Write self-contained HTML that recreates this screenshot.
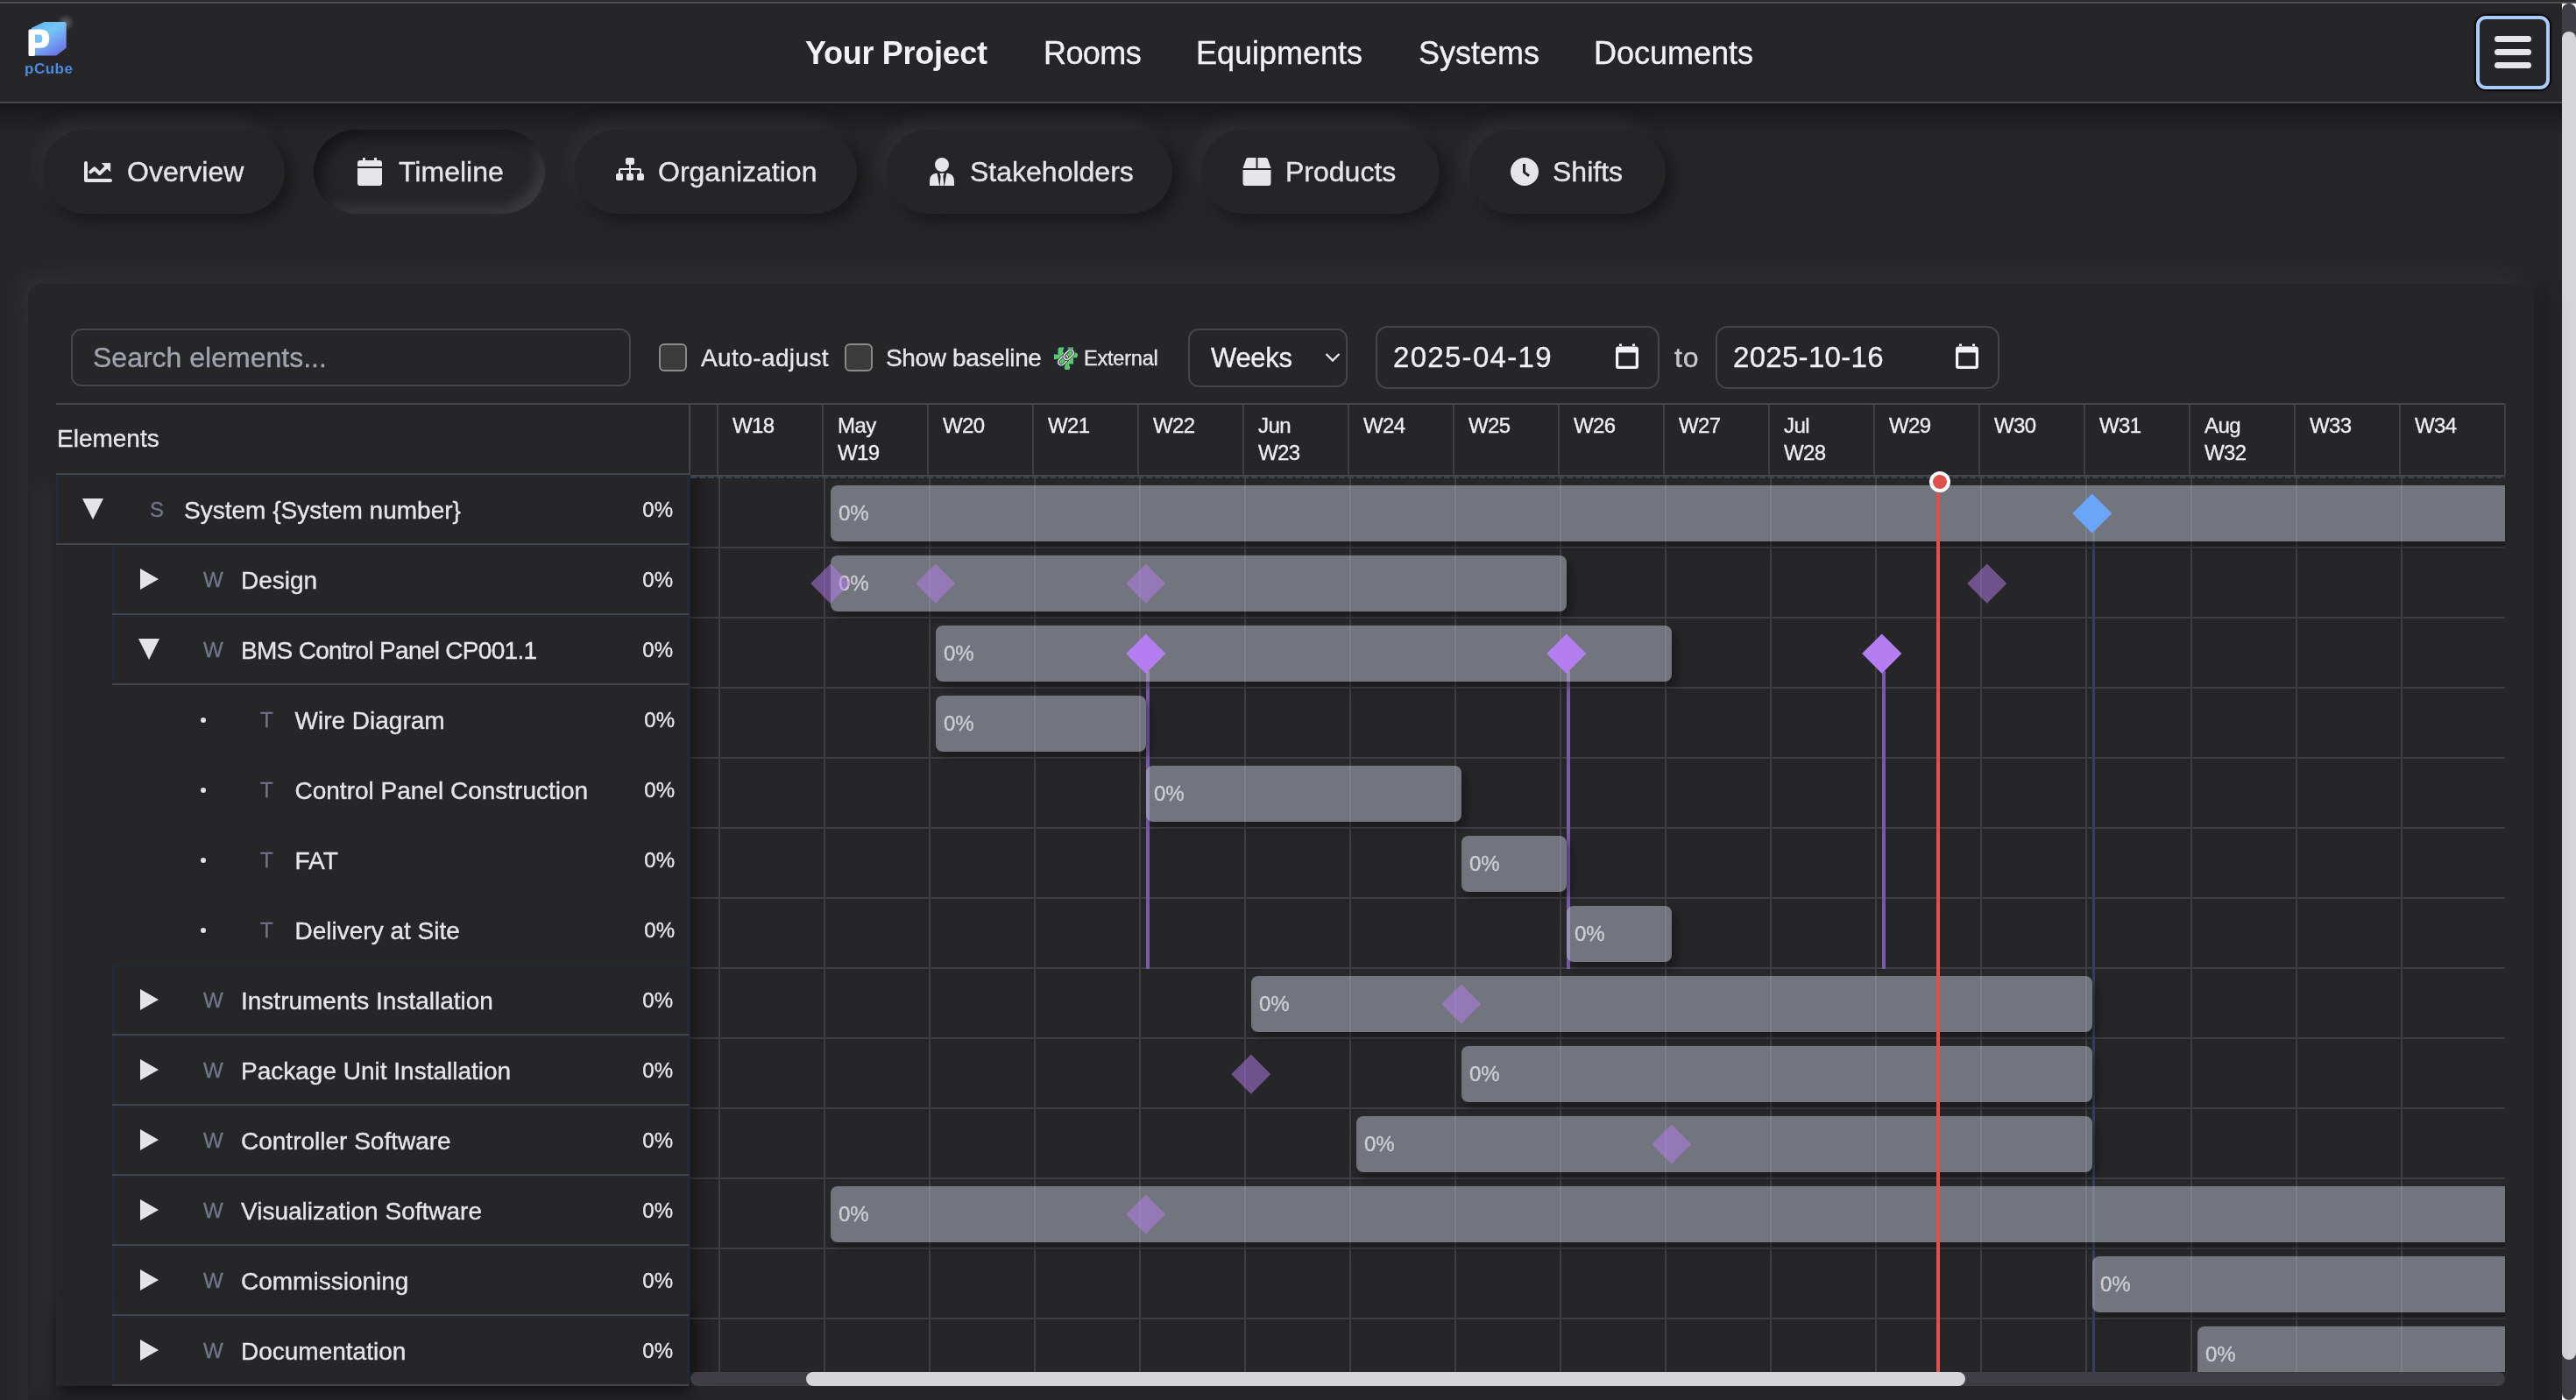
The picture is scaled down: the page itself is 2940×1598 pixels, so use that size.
<!DOCTYPE html>
<html><head><meta charset="utf-8">
<style>
*{box-sizing:border-box;margin:0;padding:0}
html,body{width:2940px;height:1598px;overflow:hidden;background:#262628;font-family:"Liberation Sans",sans-serif;color:#e6e6ea}
#wrap{-webkit-text-stroke:0.35px currentColor}
.a{position:absolute}
#topline0{left:0;top:0;width:2940px;height:2px;background:#2b2b2d}
#topline{left:0;top:2px;width:2940px;height:2px;background:#505052}
#nav{left:0;top:4px;width:2924px;height:112px;background:#262629}
#navb{left:0;top:116px;width:2924px;height:2px;background:#47474d}
#navsh{left:0;top:118px;width:2924px;height:34px;background:linear-gradient(#18181a,rgba(24,24,26,0.6) 40%,rgba(38,38,40,0))}
.nl{top:39px;font-size:36px;line-height:44px;color:#f2f2f4;white-space:nowrap}
#logo{left:25px;top:22px;width:64px;height:70px}
#ham{left:2826px;top:18px;width:84px;height:84px;border-radius:11px;background:#262629;border:4px solid #a8cbf7;box-shadow:0 0 0 1.5px #000,0 0 3px 1px #000}
#ham i{position:absolute;left:17px;width:42px;height:7px;border-radius:4px;background:#e6e6ea}
#vsb{left:2924px;top:4px;width:16px;height:1594px;background:#fff}
#vsbt{left:0;top:0;width:16px;height:1594px;background:#3f3e44;border-radius:8px}
#vsbth{left:0;top:32px;width:16px;height:1516px;background:#d5d4d9;border-radius:8px}

.tab{top:148px;height:96px;border-radius:48px;background:#252527;box-shadow:8px 8px 16px #19191b,-8px -8px 16px #2f2f32;font-size:32px;line-height:96px;white-space:nowrap;color:#e6e6ea}
.tab.on{box-shadow:inset 8px 8px 14px #161618,inset -8px -8px 14px #3c3c3f}
.tab svg{position:absolute;fill:#e6e6ea}
.tab span{position:absolute;top:0}

#card{left:32px;top:324px;width:2860px;height:1400px;border-radius:16px;background:#262628;box-shadow:-10px -10px 22px #303033,10px 10px 24px #1c1c1e}
.inp{border:2px solid #45454b;border-radius:12px}
.cb{width:32px;height:32px;border:2px solid #8a8a8a;background:#3b3b3b;border-radius:6px}
.lbl{font-size:28px;line-height:32px;white-space:nowrap;color:#e6e6ea}
.hl{top:470px;font-size:24px;line-height:31px;white-space:nowrap;color:#ececf0;letter-spacing:-0.6px}
.bar{height:64px;border-radius:8px;background:rgba(178,182,196,0.55);box-shadow:5px 6px 10px rgba(0,0,0,0.32),-5px -5px 10px rgba(255,255,255,0.022)}
.bar span{position:absolute;left:9px;top:17.5px;font-size:24px;line-height:28px;color:#cdcdd2}
.dm{width:31.5px;height:31.5px;transform:rotate(45deg)}
.dm.se{background:rgba(181,126,240,0.5)}
.dm.pu{background:#b57ef0}
.dm.bl{background:#6aa5f8}
.ty{font-size:24px;line-height:28px;color:#6e7688}
.nm{font-size:28px;line-height:32px;white-space:nowrap;color:#e6e6ea}
.pc{width:100px;text-align:right;font-size:24px;line-height:28px;color:#e6e6ea}
</style></head><body>
<div id="wrap" style="position:absolute;left:0;top:0;width:2940px;height:1598px;overflow:hidden;will-change:transform">
<div class="a" id="topline0"></div>
<div class="a" id="topline"></div>
<div class="a" id="nav"></div>
<div class="a" id="navb"></div>
<div class="a" id="navsh"></div>
<!-- logo -->
<svg class="a" id="logo" viewBox="0 0 64 70" style="overflow:visible">
 <defs><linearGradient id="lg" x1="0.2" y1="0" x2="0.85" y2="1"><stop offset="0" stop-color="#5fb6f2"/><stop offset="0.35" stop-color="#76c6f8"/><stop offset="1" stop-color="#6b6ce6"/></linearGradient>
 <radialGradient id="gl" cx="0.5" cy="0.5" r="0.5"><stop offset="0" stop-color="#fff" stop-opacity="0.5"/><stop offset="1" stop-color="#fff" stop-opacity="0"/></radialGradient></defs>
 <circle cx="50" cy="4" r="10" fill="url(#gl)" opacity="0.55"/>
 <path d="M10.7 10 L25.6 3 H47.4 Q50.7 3 50.7 6.3 V32.8 L39 41.6 H15 Z" fill="url(#lg)"/>
 <path d="M7.5 13 Q7.5 11.4 9 11.4 H21 Q31.2 11.4 31.2 22.1 Q31.2 32.8 21 32.8 H15 V40.5 Q15 42 13.5 42 H9 Q7.5 42 7.5 40.5 Z M15 17.5 V26.7 H20.5 Q23.3 26.7 23.3 22.1 Q23.3 17.5 20.5 17.5 Z" fill="#fff" fill-rule="evenodd"/>
 <text x="3" y="62" font-family="Liberation Sans" font-weight="bold" font-size="17" letter-spacing="0.5" fill="#4a8ae0" style="-webkit-text-stroke:0">pCube</text>
</svg>
<div class="a nl" style="left:919px;font-weight:bold;letter-spacing:-0.3px;-webkit-text-stroke:0">Your Project</div>
<div class="a nl" style="left:1191px;letter-spacing:-0.6px">Rooms</div>
<div class="a nl" style="left:1365px">Equipments</div>
<div class="a nl" style="left:1619px">Systems</div>
<div class="a nl" style="left:1819px">Documents</div>
<div class="a" id="ham"><i style="top:19px"></i><i style="top:34px"></i><i style="top:49px"></i></div>
<div class="a" id="vsb"><div class="a" id="vsbt"></div><div class="a" id="vsbth"></div></div>

<!-- tabs -->
<div class="a tab" style="left:49px;width:276px">
 <svg style="left:47px;top:36px" width="32" height="24" viewBox="0 0 32 24"><path d="M2 2V22H30" fill="none" stroke="#e6e6ea" stroke-width="4" stroke-linecap="round" stroke-linejoin="round"/><path d="M7.3 12.3L11.9 8.4L17.7 14.1L24.5 7.5" fill="none" stroke="#e6e6ea" stroke-width="4" stroke-linecap="round" stroke-linejoin="round"/><path d="M20.6 2.4H29.7V11.6Z" stroke="#e6e6ea" stroke-width="1" stroke-linejoin="round"/></svg>
 <span style="left:96px">Overview</span></div>
<div class="a tab on" style="left:358px;width:264px">
 <svg style="left:50px;top:32px" width="28" height="32" viewBox="0 0 28 32"><path d="M6 0h3v4H6z M19 0h3v4h-3z"/><path d="M3 3h22a3 3 0 0 1 3 3v4H0V6a3 3 0 0 1 3-3z M0 12h28v17a3 3 0 0 1-3 3H3a3 3 0 0 1-3-3z"/></svg>
 <span style="left:97px">Timeline</span></div>
<div class="a tab" style="left:656px;width:322px">
 <svg style="left:47px;top:32px" width="32" height="28" viewBox="0 0 32 28"><rect x="11" y="0" width="10" height="8" rx="2"/><rect x="0" y="18" width="8" height="8" rx="2"/><rect x="12" y="18" width="8" height="8" rx="2"/><rect x="24" y="18" width="8" height="8" rx="2"/><path d="M15 8h2v4h10a2 2 0 0 1 2 2v4h-2v-4H17v4h-2v-4H5v4H3v-4a2 2 0 0 1 2-2h10z"/></svg>
 <span style="left:95px">Organization</span></div>
<div class="a tab" style="left:1012px;width:326px">
 <svg style="left:48px;top:32px" width="30" height="32" viewBox="0 0 30 32"><circle cx="15" cy="8" r="8"/><path d="M9.6 17.8 L12.2 32 H1 V27 Q1 18.6 8.2 17.8 Z M20.4 17.8 L17.8 32 H29 V27 Q29 18.6 21.8 17.8 Z M12.3 17.8 H17.7 L16.4 21 L17.4 32 H12.6 L13.6 21 Z"/></svg>
 <span style="left:95px">Stakeholders</span></div>
<div class="a tab" style="left:1371px;width:272px">
 <svg style="left:47px;top:32px" width="33" height="32" viewBox="0 0 33 32"><path d="M6 0h9.5v12H0.5L4 2A3 3 0 0 1 6 0z M17.5 0H27a3 3 0 0 1 2 2l3.5 10H17.5z M0.5 14h32v15a3 3 0 0 1-3 3h-26a3 3 0 0 1-3-3z"/></svg>
 <span style="left:96px">Products</span></div>
<div class="a tab" style="left:1677px;width:224px">
 <svg style="left:47px;top:32px" width="32" height="32" viewBox="0 0 32 32"><path d="M16 0a16 16 0 1 1 0 32a16 16 0 1 1 0-32z M14 7v9.5a1.5 1.5 0 0 0 0.7 1.3l5.5 4.2l1.8-2.4l-4.9-3.6V7z" fill-rule="evenodd"/></svg>
 <span style="left:95px">Shifts</span></div>

<!-- card -->
<div class="a" id="card"></div>
<div class="a inp" style="left:81px;top:375px;width:639px;height:66px"></div>
<div class="a" style="left:106px;top:388px;font-size:32px;line-height:40px;color:#9ea3ad;white-space:nowrap">Search elements...</div>
<div class="a cb" style="left:752px;top:392px"></div>
<div class="a lbl" style="left:800px;top:392.5px;letter-spacing:0.4px">Auto-adjust</div>
<div class="a cb" style="left:964px;top:392px"></div>
<div class="a lbl" style="left:1011px;top:392.5px;letter-spacing:-0.35px">Show baseline</div>
<svg class="a" style="left:1203px;top:394px" width="27" height="28" viewBox="0 0 27 28">
 <rect x="1" y="1.5" width="24.5" height="25" rx="5" fill="#1e2839"/>
 <path d="M6 2.5h5.5l-0.8 2.5a3.3 3.3 0 1 0 5.6 0l-0.8-2.5H22v6.5l2-0.5a3 3 0 1 1 0 6l-2-0.5V21.5h-5l0.8 2.5a3.2 3.2 0 1 1-5.6 0l0.8-2.5H4.5V15.5l-2.5 0.6a3 3 0 1 1 0-5.7l2.5 0.6V4z" fill="#5cc96a"/>
 <g fill="none" transform="rotate(-45 13.5 14)"><rect x="2.5" y="10.5" width="13" height="7" rx="3.5" stroke="#3a3a3a" stroke-width="3"/><rect x="2.5" y="10.5" width="13" height="7" rx="3.5" stroke="#d9dde6" stroke-width="1.6"/><rect x="11.5" y="10.5" width="13" height="7" rx="3.5" stroke="#3a3a3a" stroke-width="3"/><rect x="11.5" y="10.5" width="13" height="7" rx="3.5" stroke="#d9dde6" stroke-width="1.6"/></g>
</svg>
<div class="a" style="left:1237px;top:394.5px;font-size:23.5px;line-height:28px;white-space:nowrap;letter-spacing:-0.2px">External</div>
<div class="a inp" style="left:1355.5px;top:375px;width:182px;height:67px"></div>
<div class="a" style="left:1382px;top:389px;font-size:31px;line-height:40px;white-space:nowrap;color:#f0f0f2;letter-spacing:-0.3px">Weeks</div>
<svg class="a" style="left:1512px;top:402px" width="18" height="12" viewBox="0 0 18 12"><path d="M1.5 2 L9 9.5 L16.5 2" fill="none" stroke="#e6e6ea" stroke-width="2.4"/></svg>
<div class="a inp" style="left:1570px;top:372px;width:324px;height:72px;border-radius:14px"></div>
<div class="a" style="left:1590px;top:388px;font-size:33px;line-height:40px;white-space:nowrap;color:#f0f0f2;letter-spacing:1.3px">2025-04-19</div>
<svg class="a" style="left:1844px;top:392px" width="26" height="29" viewBox="0 0 26 29"><path d="M4 0.5h3v3.5H4z M19 0.5h3v3.5h-3z M3 3.5h20a3 3 0 0 1 3 3v19.5a3 3 0 0 1-3 3H3a3 3 0 0 1-3-3V6.5a3 3 0 0 1 3-3z M3.2 10.4v15.4h19.5V10.4z" fill="#f4f4f6" fill-rule="evenodd"/></svg>
<div class="a" style="left:1911px;top:388px;font-size:32px;line-height:40px;color:#c8c8cc;letter-spacing:0.8px">to</div>
<div class="a inp" style="left:1958px;top:372px;width:324px;height:72px;border-radius:14px"></div>
<div class="a" style="left:1978px;top:388px;font-size:33px;line-height:40px;white-space:nowrap;color:#f0f0f2;letter-spacing:0.3px">2025-10-16</div>
<svg class="a" style="left:2232px;top:392px" width="26" height="29" viewBox="0 0 26 29"><path d="M4 0.5h3v3.5H4z M19 0.5h3v3.5h-3z M3 3.5h20a3 3 0 0 1 3 3v19.5a3 3 0 0 1-3 3H3a3 3 0 0 1-3-3V6.5a3 3 0 0 1 3-3z M3.2 10.4v15.4h19.5V10.4z" fill="#f4f4f6" fill-rule="evenodd"/></svg>

<!-- GANTT -->
<div class="a" style="left:64px;top:460px;width:2795px;height:1122px;background:#262628"></div>
<div class="a" style="left:60px;top:560px;width:4px;height:1022px;box-shadow:-12px 0 20px 8px rgba(255,255,255,0.03)"></div>
<div class="a" style="left:64px;top:1482px;width:723px;height:100px;box-shadow:2px 12px 16px -2px #161618"></div>
<div class="a" style="left:64px;top:460px;width:2795px;height:2px;background:#45454b"></div>
<div class="a" style="left:65px;top:485px;font-size:28px;line-height:32px;white-space:nowrap">Elements</div>
<div class="a" style="left:64px;top:540px;width:724px;height:2px;background:#45454b"></div>
<div class="a" style="left:786px;top:462px;width:2px;height:80px;background:#45454b"></div>
<div class="a" style="left:818px;top:462px;width:2px;height:80px;background:#3f3f45"></div>
<div class="a" style="left:938px;top:462px;width:2px;height:80px;background:#3f3f45"></div>
<div class="a" style="left:1058px;top:462px;width:2px;height:80px;background:#3f3f45"></div>
<div class="a" style="left:1178px;top:462px;width:2px;height:80px;background:#3f3f45"></div>
<div class="a" style="left:1298px;top:462px;width:2px;height:80px;background:#3f3f45"></div>
<div class="a" style="left:1418px;top:462px;width:2px;height:80px;background:#3f3f45"></div>
<div class="a" style="left:1538px;top:462px;width:2px;height:80px;background:#3f3f45"></div>
<div class="a" style="left:1658px;top:462px;width:2px;height:80px;background:#3f3f45"></div>
<div class="a" style="left:1778px;top:462px;width:2px;height:80px;background:#3f3f45"></div>
<div class="a" style="left:1898px;top:462px;width:2px;height:80px;background:#3f3f45"></div>
<div class="a" style="left:2018px;top:462px;width:2px;height:80px;background:#3f3f45"></div>
<div class="a" style="left:2138px;top:462px;width:2px;height:80px;background:#3f3f45"></div>
<div class="a" style="left:2258px;top:462px;width:2px;height:80px;background:#3f3f45"></div>
<div class="a" style="left:2378px;top:462px;width:2px;height:80px;background:#3f3f45"></div>
<div class="a" style="left:2498px;top:462px;width:2px;height:80px;background:#3f3f45"></div>
<div class="a" style="left:2618px;top:462px;width:2px;height:80px;background:#3f3f45"></div>
<div class="a" style="left:2738px;top:462px;width:2px;height:80px;background:#3f3f45"></div>
<div class="a" style="left:2858px;top:462px;width:2px;height:80px;background:#3f3f45"></div>
<div class="a hl" style="left:836px">W18</div>
<div class="a hl" style="left:956px">May<br>W19</div>
<div class="a hl" style="left:1076px">W20</div>
<div class="a hl" style="left:1196px">W21</div>
<div class="a hl" style="left:1316px">W22</div>
<div class="a hl" style="left:1436px">Jun<br>W23</div>
<div class="a hl" style="left:1556px">W24</div>
<div class="a hl" style="left:1676px">W25</div>
<div class="a hl" style="left:1796px">W26</div>
<div class="a hl" style="left:1916px">W27</div>
<div class="a hl" style="left:2036px">Jul<br>W28</div>
<div class="a hl" style="left:2156px">W29</div>
<div class="a hl" style="left:2276px">W30</div>
<div class="a hl" style="left:2396px">W31</div>
<div class="a hl" style="left:2516px">Aug<br>W32</div>
<div class="a hl" style="left:2636px">W33</div>
<div class="a hl" style="left:2756px">W34</div>
<div class="a" style="left:788px;top:542px;width:2071px;height:2px;background:#45454b"></div>
<div class="a" style="left:788px;top:544px;width:2071px;height:2px;background:repeating-linear-gradient(90deg,#3b424f 0 7px,transparent 7px 10px)"></div>
<div class="a" id="tl" style="left:788px;top:546px;width:2071px;height:1020px;overflow:hidden">
<div class="a" style="left:0;top:78px;width:2071px;height:2px;background:#3d3d43"></div>
<div class="a" style="left:0;top:158px;width:2071px;height:2px;background:#3d3d43"></div>
<div class="a" style="left:0;top:238px;width:2071px;height:2px;background:#3d3d43"></div>
<div class="a" style="left:0;top:318px;width:2071px;height:2px;background:#3d3d43"></div>
<div class="a" style="left:0;top:398px;width:2071px;height:2px;background:#3d3d43"></div>
<div class="a" style="left:0;top:478px;width:2071px;height:2px;background:#3d3d43"></div>
<div class="a" style="left:0;top:558px;width:2071px;height:2px;background:#3d3d43"></div>
<div class="a" style="left:0;top:638px;width:2071px;height:2px;background:#3d3d43"></div>
<div class="a" style="left:0;top:718px;width:2071px;height:2px;background:#3d3d43"></div>
<div class="a" style="left:0;top:798px;width:2071px;height:2px;background:#3d3d43"></div>
<div class="a" style="left:0;top:878px;width:2071px;height:2px;background:#3d3d43"></div>
<div class="a" style="left:0;top:958px;width:2071px;height:2px;background:#3d3d43"></div>
<div class="a" style="left:0;top:1038px;width:2071px;height:2px;background:#3d3d43"></div>
<div class="a" style="left:32px;top:0;width:2px;height:1020px;background:#3d3d43"></div>
<div class="a" style="left:152px;top:0;width:2px;height:1020px;background:#3d3d43"></div>
<div class="a" style="left:272px;top:0;width:2px;height:1020px;background:#3d3d43"></div>
<div class="a" style="left:392px;top:0;width:2px;height:1020px;background:#3d3d43"></div>
<div class="a" style="left:512px;top:0;width:2px;height:1020px;background:#3d3d43"></div>
<div class="a" style="left:632px;top:0;width:2px;height:1020px;background:#3d3d43"></div>
<div class="a" style="left:752px;top:0;width:2px;height:1020px;background:#3d3d43"></div>
<div class="a" style="left:872px;top:0;width:2px;height:1020px;background:#3d3d43"></div>
<div class="a" style="left:992px;top:0;width:2px;height:1020px;background:#3d3d43"></div>
<div class="a" style="left:1112px;top:0;width:2px;height:1020px;background:#3d3d43"></div>
<div class="a" style="left:1232px;top:0;width:2px;height:1020px;background:#3d3d43"></div>
<div class="a" style="left:1352px;top:0;width:2px;height:1020px;background:#3d3d43"></div>
<div class="a" style="left:1472px;top:0;width:2px;height:1020px;background:#3d3d43"></div>
<div class="a" style="left:1592px;top:0;width:2px;height:1020px;background:#3d3d43"></div>
<div class="a" style="left:1712px;top:0;width:2px;height:1020px;background:#3d3d43"></div>
<div class="a" style="left:1832px;top:0;width:2px;height:1020px;background:#3d3d43"></div>
<div class="a" style="left:1952px;top:0;width:2px;height:1020px;background:#3d3d43"></div>
<div class="a" style="left:2072px;top:0;width:2px;height:1020px;background:#3d3d43"></div>
<div class="a" style="left:1600px;top:60px;width:3px;height:1000px;background:#33415a"></div>
<div class="a" style="left:520px;top:220px;width:4px;height:340px;background:#785ba5"></div>
<div class="a" style="left:1000px;top:220px;width:4px;height:340px;background:#785ba5"></div>
<div class="a" style="left:1360px;top:220px;width:4px;height:340px;background:#785ba5"></div>
<div class="a bar" style="left:160px;top:8px;width:1923px"><span>0%</span></div>
<div class="a bar" style="left:160px;top:88px;width:840px"><span>0%</span></div>
<div class="a bar" style="left:280px;top:168px;width:840px"><span>0%</span></div>
<div class="a bar" style="left:280px;top:248px;width:240px"><span>0%</span></div>
<div class="a bar" style="left:520px;top:328px;width:360px"><span>0%</span></div>
<div class="a bar" style="left:880px;top:408px;width:120px"><span>0%</span></div>
<div class="a bar" style="left:1000px;top:488px;width:120px"><span>0%</span></div>
<div class="a bar" style="left:640px;top:568px;width:960px"><span>0%</span></div>
<div class="a bar" style="left:880px;top:648px;width:720px"><span>0%</span></div>
<div class="a bar" style="left:760px;top:728px;width:840px"><span>0%</span></div>
<div class="a bar" style="left:160px;top:808px;width:1923px"><span>0%</span></div>
<div class="a bar" style="left:1600px;top:888px;width:483px"><span>0%</span></div>
<div class="a bar" style="left:1720px;top:968px;width:363px"><span>0%</span></div>
<div class="a dm bl" style="left:1584.25px;top:23.75px"></div>
<div class="a dm se" style="left:144.25px;top:103.75px"></div>
<div class="a dm se" style="left:264.25px;top:103.75px"></div>
<div class="a dm se" style="left:504.25px;top:103.75px"></div>
<div class="a dm se" style="left:1464.25px;top:103.75px"></div>
<div class="a dm pu" style="left:504.25px;top:183.75px"></div>
<div class="a dm pu" style="left:984.25px;top:183.75px"></div>
<div class="a dm pu" style="left:1344.25px;top:183.75px"></div>
<div class="a dm se" style="left:864.25px;top:583.75px"></div>
<div class="a dm se" style="left:624.25px;top:663.75px"></div>
<div class="a dm se" style="left:1104.25px;top:743.75px"></div>
<div class="a dm se" style="left:504.25px;top:823.75px"></div>
<div class="a" style="left:1422px;top:4px;width:4px;height:1020px;background:#e0504a"></div>
<div class="a" style="left:0;top:0;width:34px;height:1020px;background:linear-gradient(90deg,rgba(0,0,0,0.3),rgba(0,0,0,0.08) 50%,rgba(0,0,0,0))"></div>
</div>
<div class="a" style="left:2202px;top:538px;width:24px;height:24px;border-radius:50%;background:#e0504a;border:4px solid #fff"></div>
<div class="a" style="left:788px;top:1566px;width:2071px;height:16px;border-radius:8px;background:#3f3e45"></div>
<div class="a" style="left:920px;top:1566px;width:1323px;height:16px;border-radius:8px;background:#d6d5da"></div>
<div class="a" style="left:784px;top:542px;width:2px;height:1040px;background:#1f2a3b"></div>
<div class="a" style="left:64px;top:542px;width:722px;height:1px;background:#1f2a3b"></div>
<div class="a" style="left:64px;top:542px;width:2px;height:78px;background:#1f2a3b"></div>
<div class="a" style="left:64px;top:620px;width:722px;height:2px;background:#45454b"></div>
<svg class="a" style="left:94px;top:569px" width="24" height="24" viewBox="0 0 24 24"><path d="M0 0H24L12 24Z" fill="#e4e4e8"/></svg>
<div class="a ty" style="left:171px;top:567.7px">S</div>
<div class="a nm" style="left:210px;top:567.3px">System {System number}</div>
<div class="a pc" style="left:668px;top:567.7px">0%</div>
<div class="a" style="left:128px;top:622px;width:658px;height:1px;background:#1f2a3b"></div>
<div class="a" style="left:128px;top:622px;width:2px;height:78px;background:#1f2a3b"></div>
<div class="a" style="left:128px;top:700px;width:658px;height:2px;background:#45454b"></div>
<svg class="a" style="left:159.5px;top:649px" width="21" height="24" viewBox="0 0 21 24"><path d="M0 0L21 12L0 24Z" fill="#e4e4e8"/></svg>
<div class="a ty" style="left:232px;top:647.7px">W</div>
<div class="a nm" style="left:275px;top:647.3px">Design</div>
<div class="a pc" style="left:668px;top:647.7px">0%</div>
<div class="a" style="left:128px;top:702px;width:658px;height:1px;background:#1f2a3b"></div>
<div class="a" style="left:128px;top:702px;width:2px;height:78px;background:#1f2a3b"></div>
<div class="a" style="left:128px;top:780px;width:658px;height:2px;background:#45454b"></div>
<svg class="a" style="left:158px;top:729px" width="24" height="24" viewBox="0 0 24 24"><path d="M0 0H24L12 24Z" fill="#e4e4e8"/></svg>
<div class="a ty" style="left:232px;top:727.7px">W</div>
<div class="a nm" style="left:275px;top:727.3px;letter-spacing:-0.7px">BMS Control Panel CP001.1</div>
<div class="a pc" style="left:668px;top:727.7px">0%</div>
<div class="a" style="left:229px;top:819px;width:6px;height:6px;border-radius:50%;background:#e4e4e8"></div>
<div class="a ty" style="left:297px;top:807.7px">T</div>
<div class="a nm" style="left:336.5px;top:807.3px">Wire Diagram</div>
<div class="a pc" style="left:670px;top:807.7px">0%</div>
<div class="a" style="left:229px;top:899px;width:6px;height:6px;border-radius:50%;background:#e4e4e8"></div>
<div class="a ty" style="left:297px;top:887.7px">T</div>
<div class="a nm" style="left:336.5px;top:887.3px">Control Panel Construction</div>
<div class="a pc" style="left:670px;top:887.7px">0%</div>
<div class="a" style="left:229px;top:979px;width:6px;height:6px;border-radius:50%;background:#e4e4e8"></div>
<div class="a ty" style="left:297px;top:967.7px">T</div>
<div class="a nm" style="left:336.5px;top:967.3px">FAT</div>
<div class="a pc" style="left:670px;top:967.7px">0%</div>
<div class="a" style="left:229px;top:1059px;width:6px;height:6px;border-radius:50%;background:#e4e4e8"></div>
<div class="a ty" style="left:297px;top:1047.7px">T</div>
<div class="a nm" style="left:336.5px;top:1047.3px">Delivery at Site</div>
<div class="a pc" style="left:670px;top:1047.7px">0%</div>
<div class="a" style="left:128px;top:1102px;width:658px;height:1px;background:#1f2a3b"></div>
<div class="a" style="left:128px;top:1102px;width:2px;height:78px;background:#1f2a3b"></div>
<div class="a" style="left:128px;top:1180px;width:658px;height:2px;background:#45454b"></div>
<svg class="a" style="left:159.5px;top:1129px" width="21" height="24" viewBox="0 0 21 24"><path d="M0 0L21 12L0 24Z" fill="#e4e4e8"/></svg>
<div class="a ty" style="left:232px;top:1127.7px">W</div>
<div class="a nm" style="left:275px;top:1127.3px">Instruments Installation</div>
<div class="a pc" style="left:668px;top:1127.7px">0%</div>
<div class="a" style="left:128px;top:1182px;width:658px;height:1px;background:#1f2a3b"></div>
<div class="a" style="left:128px;top:1182px;width:2px;height:78px;background:#1f2a3b"></div>
<div class="a" style="left:128px;top:1260px;width:658px;height:2px;background:#45454b"></div>
<svg class="a" style="left:159.5px;top:1209px" width="21" height="24" viewBox="0 0 21 24"><path d="M0 0L21 12L0 24Z" fill="#e4e4e8"/></svg>
<div class="a ty" style="left:232px;top:1207.7px">W</div>
<div class="a nm" style="left:275px;top:1207.3px">Package Unit Installation</div>
<div class="a pc" style="left:668px;top:1207.7px">0%</div>
<div class="a" style="left:128px;top:1262px;width:658px;height:1px;background:#1f2a3b"></div>
<div class="a" style="left:128px;top:1262px;width:2px;height:78px;background:#1f2a3b"></div>
<div class="a" style="left:128px;top:1340px;width:658px;height:2px;background:#45454b"></div>
<svg class="a" style="left:159.5px;top:1289px" width="21" height="24" viewBox="0 0 21 24"><path d="M0 0L21 12L0 24Z" fill="#e4e4e8"/></svg>
<div class="a ty" style="left:232px;top:1287.7px">W</div>
<div class="a nm" style="left:275px;top:1287.3px">Controller Software</div>
<div class="a pc" style="left:668px;top:1287.7px">0%</div>
<div class="a" style="left:128px;top:1342px;width:658px;height:1px;background:#1f2a3b"></div>
<div class="a" style="left:128px;top:1342px;width:2px;height:78px;background:#1f2a3b"></div>
<div class="a" style="left:128px;top:1420px;width:658px;height:2px;background:#45454b"></div>
<svg class="a" style="left:159.5px;top:1369px" width="21" height="24" viewBox="0 0 21 24"><path d="M0 0L21 12L0 24Z" fill="#e4e4e8"/></svg>
<div class="a ty" style="left:232px;top:1367.7px">W</div>
<div class="a nm" style="left:275px;top:1367.3px">Visualization Software</div>
<div class="a pc" style="left:668px;top:1367.7px">0%</div>
<div class="a" style="left:128px;top:1422px;width:658px;height:1px;background:#1f2a3b"></div>
<div class="a" style="left:128px;top:1422px;width:2px;height:78px;background:#1f2a3b"></div>
<div class="a" style="left:128px;top:1500px;width:658px;height:2px;background:#45454b"></div>
<svg class="a" style="left:159.5px;top:1449px" width="21" height="24" viewBox="0 0 21 24"><path d="M0 0L21 12L0 24Z" fill="#e4e4e8"/></svg>
<div class="a ty" style="left:232px;top:1447.7px">W</div>
<div class="a nm" style="left:275px;top:1447.3px">Commissioning</div>
<div class="a pc" style="left:668px;top:1447.7px">0%</div>
<div class="a" style="left:128px;top:1502px;width:658px;height:1px;background:#1f2a3b"></div>
<div class="a" style="left:128px;top:1502px;width:2px;height:78px;background:#1f2a3b"></div>
<div class="a" style="left:128px;top:1580px;width:658px;height:2px;background:#45454b"></div>
<svg class="a" style="left:159.5px;top:1529px" width="21" height="24" viewBox="0 0 21 24"><path d="M0 0L21 12L0 24Z" fill="#e4e4e8"/></svg>
<div class="a ty" style="left:232px;top:1527.7px">W</div>
<div class="a nm" style="left:275px;top:1527.3px">Documentation</div>
<div class="a pc" style="left:668px;top:1527.7px">0%</div>
</div>
</body></html>
